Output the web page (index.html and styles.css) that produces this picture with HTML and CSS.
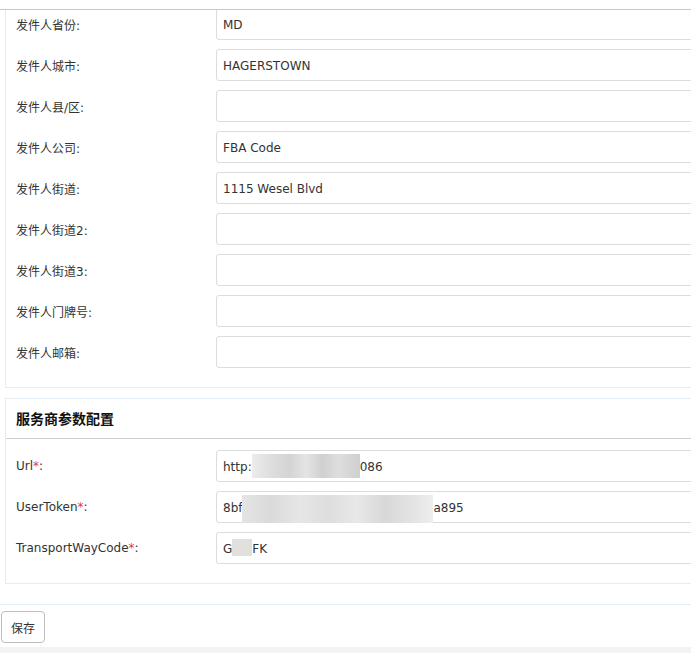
FILE: index.html
```html
<!DOCTYPE html>
<html lang="zh-CN">
<head>
    <meta charset="UTF-8">
    <title>服务商配置</title>
    <link rel="stylesheet" href="styles.css">
</head>
<body>
<div class="topline"></div>

<div class="page">
    <div class="panel first">
        <div class="row"><label>发件人省份:</label><div class="input">MD</div></div>
        <div class="row"><label>发件人城市:</label><div class="input">HAGERSTOWN</div></div>
        <div class="row"><label>发件人县/区:</label><div class="input"></div></div>
        <div class="row"><label>发件人公司:</label><div class="input">FBA Code</div></div>
        <div class="row"><label>发件人街道:</label><div class="input">1115 Wesel Blvd</div></div>
        <div class="row"><label>发件人街道2:</label><div class="input"></div></div>
        <div class="row"><label>发件人街道3:</label><div class="input"></div></div>
        <div class="row"><label>发件人门牌号:</label><div class="input"></div></div>
        <div class="row"><label>发件人邮箱:</label><div class="input"></div></div>
    </div>

    <div class="panel">
        <div class="panel-head">服务商参数配置</div>
        <div class="row"><label>Url<span class="req">*</span>:</label><div class="input">http:<span class="blur url"></span>086</div></div>
        <div class="row"><label>UserToken<span class="req">*</span>:</label><div class="input">8bf<span class="blur token"></span>a895</div></div>
        <div class="row"><label>TransportWayCode<span class="req">*</span>:</label><div class="input">G<span class="blur code"></span>FK</div></div>
    </div>

    <div class="footer">
        <button class="btn">保存</button>
    </div>
</div>
<div class="bottom"></div>
</body>
</html>
```

FILE: styles.css
```css
body {
    margin: 0;
    overflow: hidden;
    font-family: "DejaVu Sans", "Noto Sans CJK SC", sans-serif;
    font-size: 12px;
    color: #333;
    background-color: #fff;
}

.topline {
    height: 9px;
    border-bottom: 1px solid #c9c9c9;
    position: relative;
    z-index: 1;
}

.page {
    overflow: hidden;
}

.panel {
    margin-left: 5px;
    width: 900px;
    border: 1px solid #e4ecf4;
    padding: 0 0 19px 0;
}

.panel.first {
    border-top: none;
    margin-top: -2px;
    margin-bottom: 10px;
}

.panel-head {
    height: 39px;
    line-height: 41px;
    padding-left: 10px;
    font-size: 14px;
    font-weight: bold;
    color: #111;
    border-bottom: 1px solid #cfcfcf;
    margin-bottom: 11px;
}

.row {
    display: flex;
    align-items: center;
    height: 32px;
    margin-bottom: 9px;
}

.row:last-child {
    margin-bottom: 0;
}

.row label {
    width: 200px;
    padding-left: 10px;
}

.req {
    color: #e4393c;
}

.input {
    box-sizing: border-box;
    width: 520px;
    height: 32px;
    line-height: 31px;
    padding: 1px 6px 0;
    border: 1px solid #dcdcdc;
    border-radius: 3px;
    white-space: nowrap;
}

.blur {
    display: inline-block;
    vertical-align: middle;
    position: relative;
    top: -2px;
}

.blur.url {
    width: 108px;
    height: 24px;
    background: linear-gradient(90deg, #ececec 0, #dcdcdc 20%, #d4d4d4 35%, #e4e4e4 50%, #d0d0d0 65%, #dedede 80%, #cfcfcf 100%);
}

.blur.token {
    width: 191px;
    height: 28px;
    top: 0;
    background: linear-gradient(90deg, #e4e4e4 0, #dadada 15%, #e6e6e6 30%, #dedede 45%, #e8e8e8 60%, #d8d8d8 75%, #e4e4e4 90%, #eeeeee 100%);
}

.blur.code {
    width: 20px;
    height: 17px;
    background: #e2e0dd;
}

.footer {
    margin-top: 20px;
    border-top: 1px solid #e4ecf4;
    padding: 6px 0 4px 1px;
}

.btn {
    width: 44px;
    height: 32px;
    font-family: "DejaVu Sans", "Noto Sans CJK SC", sans-serif;
    font-size: 12px;
    color: #333;
    background: #fff;
    border: 1px solid #bdbdbd;
    border-radius: 4px;
    padding: 0;
}

.bottom {
    height: 6px;
    background-color: #f3f3f6;
}
```
